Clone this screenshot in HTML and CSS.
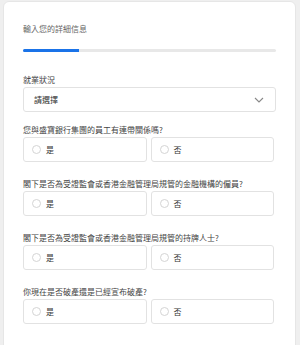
FILE: index.html
```html
<!DOCTYPE html>
<html lang="zh-Hant">
<head>
  <meta charset="UTF-8" />
  <meta name="viewport" content="width=device-width, initial-scale=1" />
  <title>輸入您的詳細信息</title>
  <link rel="stylesheet" href="styles.css">
</head>
<body>
  <div class="form-card">
    <div class="form-title">輸入您的詳細信息</div>
    <div class="progress"><div class="progress-fill"></div></div>

    <div class="field field-select">
      <label class="field-label">就業狀況</label>
      <div class="select-box">
        <span>請選擇</span>
        <svg class="chevron" width="10" height="6" viewBox="0 0 10 6"><path d="M1 1l4 4 4-4" fill="none" stroke="#888" stroke-width="1.1"/></svg>
      </div>
    </div>

    <div class="field field-first">
      <div class="field-label">您與盛寶銀行集團的員工有連帶關係嗎?</div>
      <div class="radio-row">
        <div class="radio-option"><span class="radio-dot"></span>是</div>
        <div class="radio-option"><span class="radio-dot"></span>否</div>
      </div>
    </div>

    <div class="field">
      <div class="field-label">閣下是否為受證監會或香港金融管理局規管的金融機構的僱員?</div>
      <div class="radio-row">
        <div class="radio-option"><span class="radio-dot"></span>是</div>
        <div class="radio-option"><span class="radio-dot"></span>否</div>
      </div>
    </div>

    <div class="field">
      <div class="field-label">閣下是否為受證監會或香港金融管理局規管的持牌人士?</div>
      <div class="radio-row">
        <div class="radio-option"><span class="radio-dot"></span>是</div>
        <div class="radio-option"><span class="radio-dot"></span>否</div>
      </div>
    </div>

    <div class="field">
      <div class="field-label">你現在是否破產還是已經宣布破產?</div>
      <div class="radio-row">
        <div class="radio-option"><span class="radio-dot"></span>是</div>
        <div class="radio-option"><span class="radio-dot"></span>否</div>
      </div>
    </div>
  </div>
</body>
</html>
```

FILE: styles.css
```css
:root {
  --primary-color: #1a73e8;
  --border-color: #e2e2e2;
  --text-color: #444;
}

* {
  box-sizing: border-box;
  margin: 0;
  padding: 0;
  font-family: 'Noto Sans CJK TC', 'Noto Sans', sans-serif;
}

body {
  background-color: #efefef;
  padding: 1px 4px 0 3px;
  height: 345px;
  overflow: hidden;
}

.form-card {
  background: white;
  border: 1px solid #e6e6e6;
  border-radius: 6px;
  padding: 21px 19px 30px 19px;
  color: var(--text-color);
}

.form-title {
  font-size: 8px;
  line-height: 12px;
  color: #666;
}

.progress {
  margin-top: 14px;
  height: 3px;
  background: #e8e8e8;
  border-radius: 2px;
  overflow: hidden;
}

.progress-fill {
  width: 22%;
  height: 100%;
  background: var(--primary-color);
}

.field {
  margin-top: 16px;
}

.field-select {
  margin-top: 22px;
}

.field-first {
  margin-top: 12px;
}

.field-label {
  display: block;
  font-size: 8px;
  line-height: 12px;
  margin-bottom: 1px;
  color: var(--text-color);
}

.select-box {
  display: flex;
  align-items: center;
  justify-content: space-between;
  height: 25px;
  padding: 0 10px;
  border: 1px solid var(--border-color);
  border-radius: 3px;
  font-size: 8px;
  color: #333;
}

.chevron {
  margin-right: 1px;
}

.radio-row {
  display: grid;
  grid-template-columns: 1fr 1fr;
  gap: 4px;
  margin-right: 2px;
}

.radio-option {
  display: flex;
  align-items: center;
  gap: 5px;
  height: 25px;
  padding: 0 8px;
  border: 1px solid var(--border-color);
  border-radius: 3px;
  font-size: 8px;
  color: #333;
}

.radio-dot {
  width: 9px;
  height: 9px;
  border: 1px solid #d4d4d4;
  border-radius: 50%;
}
```
